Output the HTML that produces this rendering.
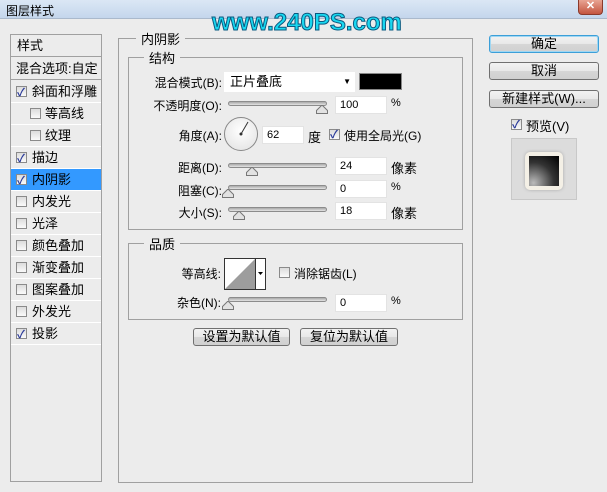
<!DOCTYPE html>
<html><head><meta charset="utf-8"><style>
*{margin:0;padding:0;box-sizing:border-box}
body{width:607px;height:492px;background:#ececec;font-family:"Liberation Sans","Noto Sans CJK SC","WenQuanYi Zen Hei",sans-serif;font-size:12px;color:#000;position:relative;overflow:hidden}
.a{position:absolute;white-space:nowrap}
.title{left:0;top:0;width:607px;height:19px;background:linear-gradient(#dbe7f5,#c4d6ec);border-bottom:1px solid #aab9cc}
.close{left:578px;top:0;width:25px;height:15px;background:linear-gradient(#e8a493,#c4553f);border:1px solid #8a3a2c;border-top:none;border-radius:0 0 4px 4px;color:#fff;font-weight:bold;text-align:center;line-height:13px;font-size:11px}
.wm{left:212px;top:9px;font-family:"Liberation Sans",sans-serif;font-weight:bold;font-size:24px;color:#19d8f0;-webkit-text-stroke:1px #0a5a80;letter-spacing:0px}
.list{left:10px;top:34px;width:92px;height:448px;border:1px solid #a0a0a0;background:#ececec}
.row{position:absolute;left:0;width:90px;height:22px;border-bottom:1px solid #fff;font-size:13px;line-height:21px}
.cb{position:absolute;width:11px;height:11px;border:1px solid #8a8a8a;background:linear-gradient(#dcdcdc,#fafafa)}
.cb.on::after{content:"✓";position:absolute;left:0px;top:-4px;font-size:11px;color:#2b3b9a;font-weight:bold}
.grp{position:absolute;border:1px solid #a0a0a0}
.lg{position:absolute;background:#ececec;padding:0 5px;font-size:13px}
.lbl{position:absolute;text-align:right;font-size:12px}
.inp{position:absolute;background:#fff;border:1px solid #e3e3e3;height:18px;padding-left:4px;line-height:17px;font-size:11px}
.sl{position:absolute;height:5px;border:1px solid #8c8c8c;border-radius:3px;background:linear-gradient(#a9a9a9,#e4e4e4)}
.th{position:absolute;width:0;height:0}
.th svg{position:absolute}
.btn{position:absolute;border:1px solid #707070;border-radius:3px;background:linear-gradient(#f2f2f2 0,#e8e8e8 50%,#d6d6d6 51%,#d0d0d0);text-align:center;font-size:12px;line-height:16px}
</style></head><body>
<div class="a title"></div>
<div class="a" style="left:6px;top:2px;font-size:12px">图层样式</div>
<div class="a close">✕</div>
<div class="a wm">www.240PS.com</div>

<div class="a list">
 <div class="row" style="top:0;height:22px;padding-left:6px;border-bottom:1px solid #a0a0a0">样式</div>
 <div class="row" style="top:23px;padding-left:5px;border-bottom:1px solid #a0a0a0">混合选项:自定</div>
 <div class="row" style="top:46px;padding-left:21px"><span class="cb on" style="left:5px;top:5px"></span>斜面和浮雕</div>
 <div class="row" style="top:68px;padding-left:34px"><span class="cb" style="left:19px;top:5px"></span>等高线</div>
 <div class="row" style="top:90px;padding-left:34px"><span class="cb" style="left:19px;top:5px"></span>纹理</div>
 <div class="row" style="top:112px;padding-left:21px"><span class="cb on" style="left:5px;top:5px"></span>描边</div>
 <div class="row" style="top:134px;padding-left:21px;background:#3399ff"><span class="cb on" style="left:5px;top:5px"></span>内阴影</div>
 <div class="row" style="top:156px;padding-left:21px"><span class="cb" style="left:5px;top:5px"></span>内发光</div>
 <div class="row" style="top:178px;padding-left:21px"><span class="cb" style="left:5px;top:5px"></span>光泽</div>
 <div class="row" style="top:200px;padding-left:21px"><span class="cb" style="left:5px;top:5px"></span>颜色叠加</div>
 <div class="row" style="top:222px;padding-left:21px"><span class="cb" style="left:5px;top:5px"></span>渐变叠加</div>
 <div class="row" style="top:244px;padding-left:21px"><span class="cb" style="left:5px;top:5px"></span>图案叠加</div>
 <div class="row" style="top:266px;padding-left:21px"><span class="cb" style="left:5px;top:5px"></span>外发光</div>
 <div class="row" style="top:288px;padding-left:21px"><span class="cb on" style="left:5px;top:5px"></span>投影</div>
</div>

<div class="grp" style="left:118px;top:38px;width:355px;height:445px"></div>
<div class="lg" style="left:136px;top:29px">内阴影</div>
<div class="grp" style="left:128px;top:57px;width:335px;height:173px"></div>
<div class="lg" style="left:144px;top:48px">结构</div>

<div class="lbl" style="left:130px;top:74px;width:92px">混合模式(B):</div>
<div class="a" style="left:224px;top:72px;width:131px;height:20px;background:#fff;padding-left:6px;line-height:19px;font-size:13px">正片叠底<span style="position:absolute;right:4px;top:0;font-size:8px">▼</span></div>
<div class="a" style="left:359px;top:73px;width:43px;height:17px;background:#000;border:1px solid #888"></div>

<div class="lbl" style="left:130px;top:97px;width:92px">不透明度(O):</div>
<div class="sl" style="left:228px;top:101px;width:99px"></div>
<div class="inp" style="left:335px;top:96px;width:52px">100</div>
<div class="a" style="left:391px;top:97px;font-size:11px">%</div>

<div class="lbl" style="left:130px;top:127px;width:92px">角度(A):</div>
<div class="a" style="left:224px;top:117px;width:34px;height:34px;border-radius:50%;border:1px solid #888;background:radial-gradient(circle at 50% 40%,#fff,#e0e0e0)"></div>
<svg class="a" style="left:224px;top:117px" width="34" height="34"><line x1="17" y1="17" x2="24" y2="5" stroke="#333" stroke-width="1"/><circle cx="17" cy="17" r="1.5" fill="#333"/></svg>
<div class="inp" style="left:262px;top:126px;width:42px">62</div>
<div class="a" style="left:308px;top:127px;font-size:13px">度</div>
<span class="cb on a" style="left:329px;top:129px"></span>
<div class="a" style="left:344px;top:127px">使用全局光(G)</div>

<div class="lbl" style="left:130px;top:159px;width:92px">距离(D):</div>
<div class="sl" style="left:228px;top:163px;width:99px"></div>
<div class="inp" style="left:335px;top:157px;width:52px">24</div>
<div class="a" style="left:391px;top:158px;font-size:13px">像素</div>

<div class="lbl" style="left:130px;top:182px;width:92px">阻塞(C):</div>
<div class="sl" style="left:228px;top:185px;width:99px"></div>
<div class="inp" style="left:335px;top:180px;width:52px">0</div>
<div class="a" style="left:391px;top:181px;font-size:11px">%</div>

<div class="lbl" style="left:130px;top:204px;width:92px">大小(S):</div>
<div class="sl" style="left:228px;top:207px;width:99px"></div>
<div class="inp" style="left:335px;top:202px;width:52px">18</div>
<div class="a" style="left:391px;top:203px;font-size:13px">像素</div>

<svg class="a" style="left:0;top:0" width="607" height="492">
<g fill="#e2e2e2" stroke="#777" stroke-width="1">
<path d="M316.5 110.5 l5 -5 h1 l5 5 v3 h-11z"/>
<path d="M246.5 172.5 l5 -5 h1 l5 5 v3 h-11z"/>
<path d="M222.5 194.5 l5 -5 h1 l5 5 v3 h-11z"/>
<path d="M233.5 216.5 l5 -5 h1 l5 5 v3 h-11z"/>
<path d="M222.5 306.5 l5 -5 h1 l5 5 v3 h-11z"/>
</g></svg>

<div class="grp" style="left:128px;top:243px;width:335px;height:77px"></div>
<div class="lg" style="left:144px;top:234px">品质</div>
<div class="lbl" style="left:130px;top:265px;width:91px">等高线:</div>
<div class="a" style="left:224px;top:258px;width:42px;height:32px;border:1px solid #333;background:#fff"></div>
<svg class="a" style="left:225px;top:259px" width="40" height="30"><polygon points="0,30 30,0 30,30" fill="#9d9d9d"/><line x1="30.5" y1="0" x2="30.5" y2="30" stroke="#333"/><polygon points="33,13 38,13 35.5,16" fill="#000"/></svg>
<span class="cb a" style="left:279px;top:267px"></span>
<div class="a" style="left:294px;top:265px">消除锯齿(L)</div>
<div class="lbl" style="left:130px;top:294px;width:91px">杂色(N):</div>
<div class="sl" style="left:228px;top:297px;width:99px"></div>
<div class="inp" style="left:335px;top:294px;width:52px">0</div>
<div class="a" style="left:391px;top:295px;font-size:11px">%</div>

<div class="btn" style="left:193px;top:328px;width:97px;height:18px;font-size:13px">设置为默认值</div>
<div class="btn" style="left:300px;top:328px;width:98px;height:18px;font-size:13px">复位为默认值</div>

<div class="btn" style="left:489px;top:35px;width:110px;height:18px;border-color:#3c9fd8;box-shadow:0 0 0 1px #9fd7f3 inset;font-size:13px">确定</div>
<div class="btn" style="left:489px;top:62px;width:110px;height:18px;font-size:13px">取消</div>
<div class="btn" style="left:489px;top:90px;width:110px;height:18px;font-size:13px">新建样式(W)...</div>
<span class="cb on a" style="left:511px;top:119px"></span>
<div class="a" style="left:526px;top:116px;font-size:13px">预览(V)</div>
<div class="a" style="left:511px;top:138px;width:66px;height:62px;background:#dcdcdc;border:1px solid #c8c8c8"></div>
<div class="a" style="left:525px;top:152px;width:38px;height:38px;border-radius:5px;background:#f4f0e6;box-shadow:0 0 3px #aaa"></div>
<div class="a" style="left:529px;top:156px;width:30px;height:30px;background:radial-gradient(circle at 15% 90%,#bbb,#333 55%,#000)"></div>
</body></html>
